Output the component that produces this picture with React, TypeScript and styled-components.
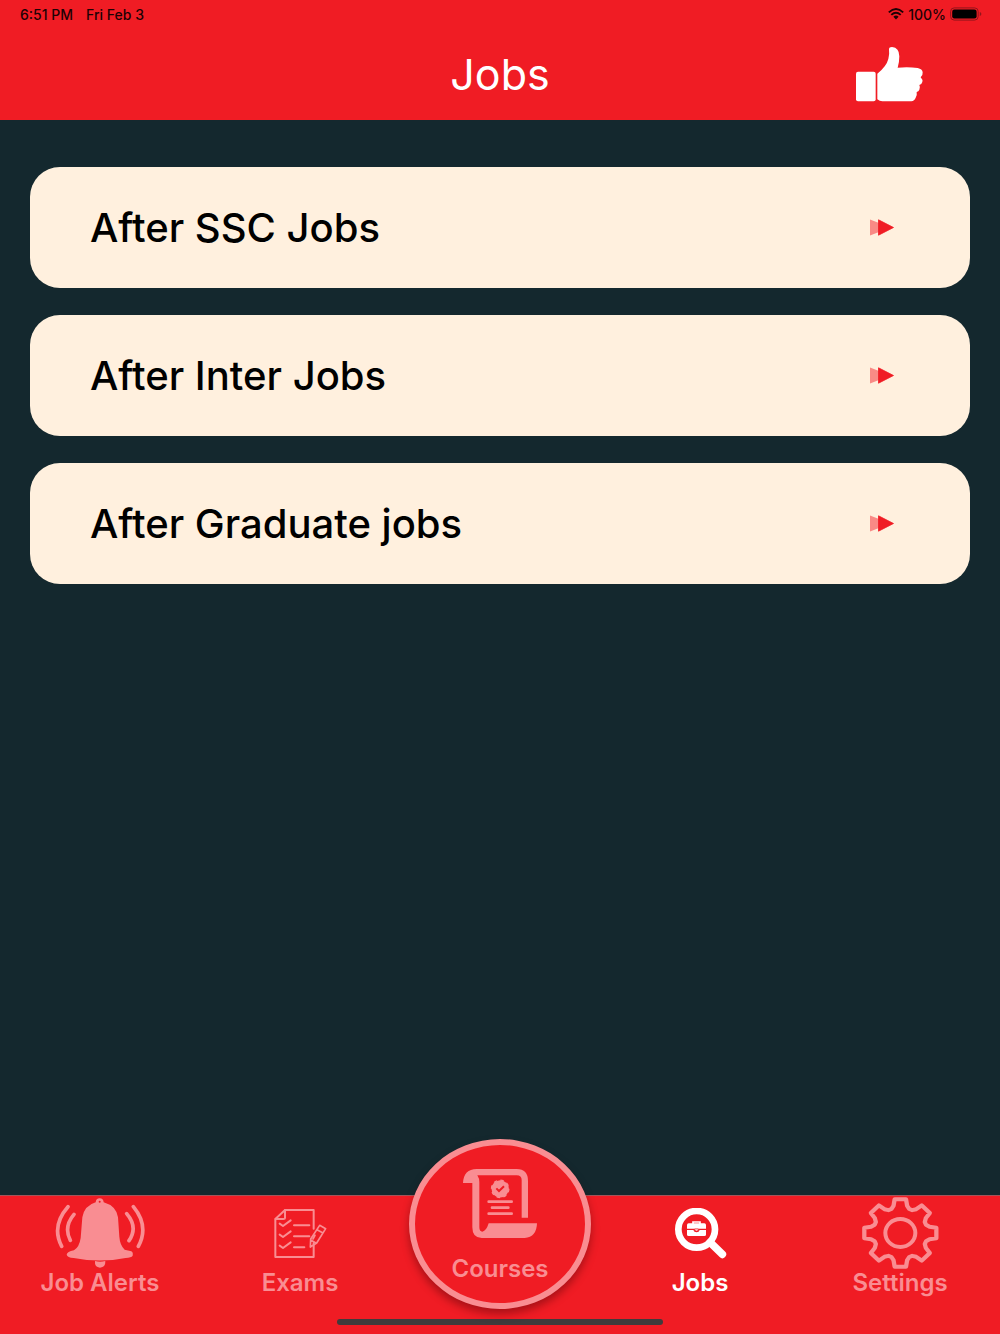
import React from "react";
import styled, { createGlobalStyle, css } from "styled-components";

const RED = "#f01c24";
const PINK = "#f98d92";
const NAVY = "#14282e";

const GlobalStyle = createGlobalStyle`
  *, *::before, *::after { box-sizing: border-box; }
  body {
    margin: 0;
    background: ${NAVY};
    font-family: Inter, "Liberation Sans", sans-serif;
  }
  button { font: inherit; color: inherit; border: 0; padding: 0; background: none; cursor: pointer; }
  svg { display: block; flex: none; }
`;

const Screen = styled.div`
  display: flex;
  flex-direction: column;
  min-height: 100vh;
`;

const Header = styled.header`
  background: ${RED};
`;

const StatusBar = styled.div`
  display: flex;
  justify-content: space-between;
  align-items: center;
  height: 28px;
  padding: 0 18px 0 20px;
  font-size: 14px;
  font-weight: 500;
  color: #1c0204;
`;

const StatusGroup = styled.div<{ $gap: number }>`
  display: flex;
  align-items: center;
  gap: ${(p) => p.$gap}px;
`;

const TitleBar = styled.div`
  display: grid;
  grid-template-columns: 1fr auto 1fr;
  align-items: center;
  height: 92px;
  padding: 0 77px;
`;

const Title = styled.h1`
  grid-column: 2;
  margin: 0;
  font-size: 43px;
  line-height: 56px;
  font-weight: 400;
  color: #fff;
`;

const LikeButton = styled.button`
  justify-self: end;
`;

const JobList = styled.main`
  flex: 1;
  display: flex;
  flex-direction: column;
  gap: 27px;
  padding: 47px 30px;
`;

const JobCard = styled.button`
  display: flex;
  align-items: center;
  justify-content: space-between;
  height: 121px;
  padding: 0 75px 0 60px;
  border-radius: 30px;
  background: #fff0de;
  color: #000;
  font-size: 40px;
  font-weight: 500;
  text-align: left;
`;

const Footer = styled.footer`
  background: ${RED};
  border-top: 1px solid #a3545a;
`;

const Tabs = styled.nav`
  display: grid;
  grid-template-columns: repeat(5, 1fr);
  height: 123px;
`;

const tabText = css`
  font-size: 24px;
  line-height: 26px;
  font-weight: 600;
`;

const Tab = styled.button<{ $active?: boolean }>`
  display: flex;
  flex-direction: column;
  align-items: center;
  ${tabText}
  color: ${(p) => (p.$active ? "#fff" : PINK)};
`;

const TabIcon = styled.span`
  display: flex;
  align-items: center;
  height: 74px;
`;

const CenterTab = styled.button`
  justify-self: center;
  display: flex;
  flex-direction: column;
  align-items: center;
  gap: 17px;
  width: 182px;
  height: 170px;
  margin-top: -57px;
  padding-top: 23px;
  border: 6px solid ${PINK};
  border-radius: 50%;
  background: ${RED};
  box-shadow: 0 5px 8px rgba(60, 0, 5, 0.4);
  ${tabText}
  color: ${PINK};
`;

const HomeIndicator = styled.div`
  width: 326px;
  height: 6px;
  margin: 0 auto 9px;
  border-radius: 3px;
  background: #3f3b3c;
`;

const WifiIcon = () => (
  <svg width="16" height="12" viewBox="0 0 16 12" fill="none" stroke="#1c0204" strokeWidth="1.9">
    <path d="M.8 4.4Q8-2.2 15.2 4.4M3.3 6.9Q8 2.6 12.7 6.9" />
    <path d="M5.4 8.7Q8 6.4 10.6 8.7L8 11.4Z" fill="#1c0204" stroke="none" />
  </svg>
);

const BatteryIcon = () => (
  <svg width="32" height="14" viewBox="0 0 32 14">
    <rect x=".6" y=".9" width="27.6" height="12.2" rx="3.6" fill="none" stroke="#93151b" />
    <rect x="2.2" y="2.5" width="24.4" height="9" rx="2.2" />
    <path d="M29.8 5v4q1.6-.6 1.6-2t-1.6-2Z" fill="#93151b" />
  </svg>
);

const ThumbIcon = () => (
  <svg width="67" height="55" viewBox="48 141 201 165" fill="#fff">
    <rect x="48" y="215" width="59" height="89" rx="6" />
    <path d="M112 221Q139 200 145 177Q149 163 147 148Q147 141 156 141Q178 143 178 169Q178 187 173 203Q205 200 233 204Q247 207 248 217Q249 227 242 232Q249 239 247 246Q245 253 238 255Q242 263 238 269Q236 274 230 276Q232 286 227 293Q223 303 214 304H127Q119 304 112 298Z" />
  </svg>
);

const ArrowIcon = () => (
  <svg width="25" height="18" viewBox="0 0 25 18">
    <path d="M0 .5L9 4V13L0 16.5Z" fill="#f98a85" />
    <path d="M8.5 .8L23.5 8.5L8.5 16.2Z" fill={RED} stroke={RED} strokeWidth=".8" strokeLinejoin="round" />
  </svg>
);

const BellIcon = () => (
  <svg width="90" height="72" viewBox="108 51 270 216" fill={PINK}>
    <path d="M230 67Q231 55 242 55Q253 55 254 67Q292 78 297 112L301 170Q303 196 317 209L337 214Q343 217 341 227Q337 233 320 234Q243 249 164 234Q145 233 143 224Q144 215 165 211Q181 201 185 174L190 112Q196 77 230 67Z" />
    <path d="M228 243Q243 248 259 243Q260 262 243 263Q226 262 228 243Z" />
    <circle cx="242" cy="65" r="3" fill={RED} />
    <path d="M147 80Q96 138 128 199M165 103Q133 141 154 181M343 80Q391 138 358 199M323 101Q358 142 330 182" fill="none" stroke={PINK} strokeWidth="11" strokeLinecap="round" />
  </svg>
);

const ExamIcon = () => (
  <svg width="54" height="51" viewBox="99 81 162 153" fill="none" stroke={PINK} strokeWidth="6" strokeLinecap="round" strokeLinejoin="round">
    <path d="M221 143V87H135L106 114V228H221V186" />
    <path d="M135 87V111Q135 114 130 114H107" />
    <path d="M119 128L129 135L152 118M119 161L129 168L152 151M119 194L129 201L152 184M162 133H208M162 166H208M162 199H193" />
    <path d="M239 133L257 143L230 186L211 198L212 174ZM231 146L249 156M212 177L229 187M225 163L219 174" strokeWidth="5" />
  </svg>
);

const CourseIcon = () => (
  <svg width="76" height="71" viewBox="186 114 228 213">
    <path d="M189 159Q191 117 230 117H350Q384 117 384 153V263H365V150Q365 136 350 136H232Q238 145 238 157V291Q238 305 247 305Q259 303 266 280H411Q410 321 374 324H245Q217 324 217 292V159Z" fill={PINK} />
    <circle cx="300.5" cy="176.5" r="26" fill={PINK} />
    <circle cx="300.5" cy="176.5" r="26" fill="none" stroke={PINK} strokeWidth="4" strokeDasharray="10.2 10.2" />
    <path d="M289 175L297 183L312 169" fill="none" stroke={RED} strokeWidth="6" />
    <path d="M266 215H335M276 233H325M266 251H335" fill="none" stroke={PINK} strokeWidth="8" strokeLinecap="round" />
  </svg>
);

const JobIcon = () => (
  <svg width="53" height="51" viewBox="102 51 159 153">
    <circle cx="170" cy="115" r="55" fill="none" stroke="#fff" strokeWidth="20" />
    <path d="M210 154L247 190" stroke="#fff" strokeWidth="23" strokeLinecap="round" />
    <path d="M159 101V93H180V101" fill="none" stroke="#fff" strokeWidth="5" />
    <path d="M146 97H193Q198 97 198 102V113H141V102Q141 97 146 97ZM141 117H160Q162 124 170 124Q177 124 179 117H198V131Q198 135 193 135H146Q141 135 141 131Z" fill="#fff" />
    <path d="M164 114H175V118Q170 122 164 118Z" fill="#fff" stroke={RED} strokeWidth="2" />
  </svg>
);

const TEETH = [0, 45, 90, 135, 180, 225, 270, 315];

function gearOutline() {
  const tooth = [[-25, -72], [-19, -82], [-16, -101], [16, -101], [19, -82], [25, -72]];
  const points = TEETH.flatMap((deg) => {
    const a = (deg * Math.PI) / 180;
    return tooth.map(([x, y]) =>
      `${(x * Math.cos(a) - y * Math.sin(a)).toFixed(1)} ${(x * Math.sin(a) + y * Math.cos(a)).toFixed(1)}`
    );
  });
  return `M${points.join("L")}Z`;
}

const GearIcon = () => (
  <svg width="79" height="74" viewBox="-118 -111 237 222" fill="none" stroke={PINK} strokeWidth="12" strokeLinejoin="round">
    <path d={gearOutline()} transform="scale(1.07 1)" />
    <ellipse rx="45" ry="42" />
  </svg>
);

const JOBS = ["After SSC Jobs", "After Inter Jobs", "After Graduate jobs"];

export default function App() {
  return (
    <Screen>
      <GlobalStyle />
      <Header>
        <StatusBar>
          <StatusGroup $gap={13}>
            <span>6:51 PM</span>
            <span>Fri Feb 3</span>
          </StatusGroup>
          <StatusGroup $gap={4}>
            <WifiIcon />
            <span>100%</span>
            <BatteryIcon />
          </StatusGroup>
        </StatusBar>
        <TitleBar>
          <Title>Jobs</Title>
          <LikeButton aria-label="Like">
            <ThumbIcon />
          </LikeButton>
        </TitleBar>
      </Header>
      <JobList>
        {JOBS.map((job) => (
          <JobCard key={job}>
            <span>{job}</span>
            <ArrowIcon />
          </JobCard>
        ))}
      </JobList>
      <Footer>
        <Tabs>
          <Tab><TabIcon><BellIcon /></TabIcon>Job Alerts</Tab>
          <Tab><TabIcon><ExamIcon /></TabIcon>Exams</Tab>
          <CenterTab><CourseIcon />Courses</CenterTab>
          <Tab $active aria-current="page"><TabIcon><JobIcon /></TabIcon>Jobs</Tab>
          <Tab><TabIcon><GearIcon /></TabIcon>Settings</Tab>
        </Tabs>
        <HomeIndicator />
      </Footer>
    </Screen>
  );
}
